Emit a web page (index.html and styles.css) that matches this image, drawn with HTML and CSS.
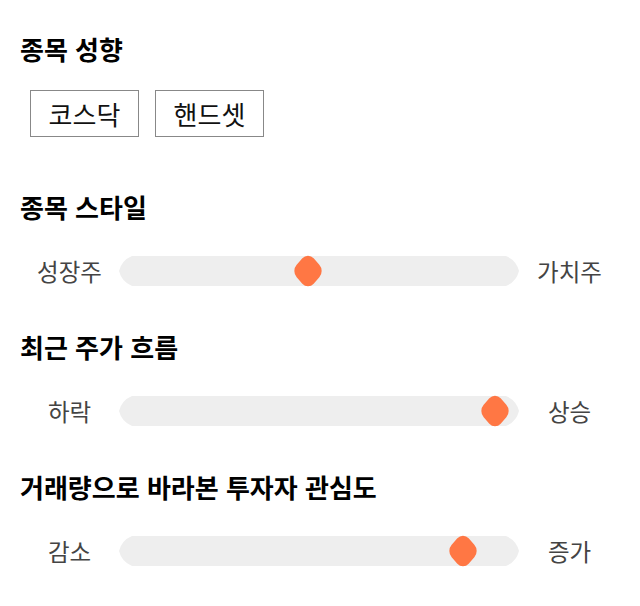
FILE: index.html
```html
<!DOCTYPE html>
<html lang="ko">

<head>
    <meta charset="utf-8">
    <link rel="stylesheet" href="styles.css">
</head>

<body>
    <div class="panel">
        <section class="group">
            <h2 class="group-title">종목 성향</h2>
            <div class="chip-list">
                <button class="chip">코스닥</button>
                <button class="chip">핸드셋</button>
            </div>
        </section>

        <section class="group">
            <h2 class="group-title">종목 스타일</h2>
            <div class="scale-row">
                <span class="scale-label">성장주</span>
                <div class="slider">
                    <div class="track"></div>
                    <div class="thumb" style="left: 47.25%"></div>
                </div>
                <span class="scale-label">가치주</span>
            </div>
        </section>

        <section class="group">
            <h2 class="group-title">최근 주가 흐름</h2>
            <div class="scale-row">
                <span class="scale-label">하락</span>
                <div class="slider">
                    <div class="track"></div>
                    <div class="thumb" style="left: 94%"></div>
                </div>
                <span class="scale-label">상승</span>
            </div>
        </section>

        <section class="group">
            <h2 class="group-title">거래량으로 바라본 투자자 관심도</h2>
            <div class="scale-row">
                <span class="scale-label">감소</span>
                <div class="slider">
                    <div class="track"></div>
                    <div class="thumb" style="left: 86%"></div>
                </div>
                <span class="scale-label">증가</span>
            </div>
        </section>
    </div>
</body>

</html>
```

FILE: styles.css
```css
body {
    margin: 0;
    background: #fff;
    font-family: 'Noto Sans CJK KR', 'Noto Sans', sans-serif;
    color: #000;
}

.panel {
    width: 600px;
    padding: 31px 20px 0;
    display: flex;
    flex-direction: column;
    gap: 38px;
}

.group-title {
    margin: 0;
    font-size: 26px;
    line-height: 36px;
    font-weight: bold;
}

.chip-list {
    display: flex;
    gap: 16px;
    margin: 23px 0 14px 10px;
}

.chip {
    width: 109px;
    height: 47px;
    padding: 0;
    border: 1px solid #888;
    border-radius: 0;
    background: #fff;
    font-family: inherit;
    font-size: 26px;
    color: #111;
    display: flex;
    justify-content: center;
    align-items: center;
}

.scale-row {
    display: grid;
    grid-template-columns: 99px 400px 1fr;
    align-items: center;
    height: 40px;
    margin-top: 26px;
}

.scale-label {
    text-align: center;
    font-size: 23.5px;
    color: #444;
}

.slider {
    position: relative;
    height: 30px;
}

.track {
    height: 30px;
    background: #eee;
    clip-path: path('M13,0 H387 A22,22 0 0 1 400,15 A22,22 0 0 1 387,30 H13 A22,22 0 0 1 0,15 A22,22 0 0 1 13,0 Z');
}

.thumb {
    position: absolute;
    top: 50%;
    width: 24px;
    height: 24px;
    border-radius: 8px;
    background: #ff7744;
    transform: translate(-50%, -50%) scaleY(1.12) rotate(45deg);
}
```
